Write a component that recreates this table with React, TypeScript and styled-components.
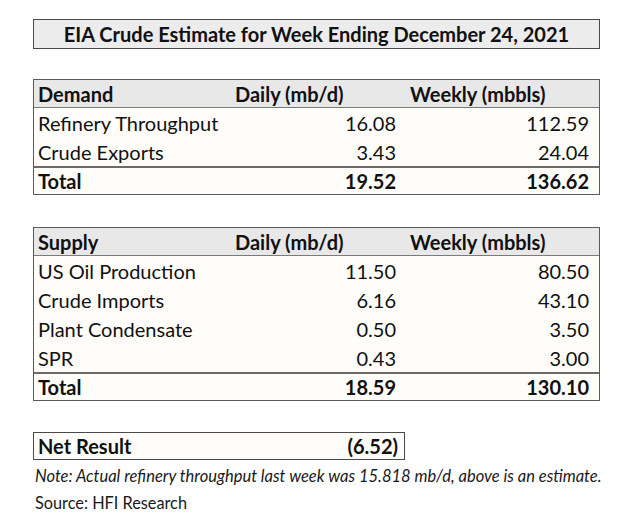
import React from "react";
import styled, { createGlobalStyle } from "styled-components";

const GlobalStyle = createGlobalStyle`
  body {
    margin: 0;
    background: #ffffff;
    font-family: Lato, "Liberation Sans", sans-serif;
    color: #111111;
  }
`;

const Page = styled.div`
  width: 620px;
  height: 514px;
  box-sizing: border-box;
  padding: 19px 20px 0 33px;
  display: flex;
  flex-direction: column;
`;

const Title = styled.div`
  width: 567px;
  height: 30px;
  box-sizing: border-box;
  border: 1.5px solid #4a4a4a;
  background: #ececec;
  display: flex;
  align-items: center;
  justify-content: center;
  font-weight: 700;
  font-size: 20px;
  color: #111;
`;

const Table = styled.div<{ $top: number }>`
  margin-top: ${(p) => p.$top}px;
  width: 567px;
  box-sizing: border-box;
  border: 1.5px solid #5a5a5a;
  background: #fefdf9;
`;

const Row = styled.div<{ $kind: "head" | "body" | "total" }>`
  display: grid;
  grid-template-columns: 197px 161px 1fr;
  align-items: center;
  height: ${(p) => (p.$kind === "body" ? 29 : 28)}px;
  box-sizing: border-box;
  padding: 0 10px 0 4px;
  font-size: 20px;
  font-weight: ${(p) => (p.$kind === "body" ? 400 : 700)};
  background: ${(p) => (p.$kind === "head" ? "#e8e8e8" : "transparent")};
  border-bottom: ${(p) => (p.$kind === "head" ? "1.5px solid #7a7a7a" : "none")};
  border-top: ${(p) => (p.$kind === "total" ? "2px solid #6a6a6a" : "none")};
`;

const Cell = styled.div<{ $align?: "left" | "right" }>`
  text-align: ${(p) => p.$align || "left"};
  white-space: nowrap;
`;

const HeadCell = styled.div<{ $indent?: number }>`
  padding-left: ${(p) => p.$indent || 0}px;
  white-space: nowrap;
`;

const NetBox = styled.div`
  margin-top: 31px;
  width: 372px;
  height: 28px;
  box-sizing: border-box;
  border: 1.5px solid #4a4a4a;
  background: #fefdf9;
  display: flex;
  align-items: center;
  justify-content: space-between;
  padding: 0 6px 0 4px;
  font-weight: 700;
  font-size: 20px;
`;

const Note = styled.div`
  margin-top: 6px;
  font-style: italic;
  font-size: 16.5px;
  color: #1a1a1a;
  padding-left: 2px;
  white-space: nowrap;
`;

const Source = styled.div`
  margin-top: 7px;
  font-size: 16.3px;
  color: #1a1a1a;
  padding-left: 2px;
`;

type Line = [string, string, string];

const demand: Line[] = [
  ["Refinery Throughput", "16.08", "112.59"],
  ["Crude Exports", "3.43", "24.04"],
];

const supply: Line[] = [
  ["US Oil Production", "11.50", "80.50"],
  ["Crude Imports", "6.16", "43.10"],
  ["Plant Condensate", "0.50", "3.50"],
  ["SPR", "0.43", "3.00"],
];

function Block({
  label,
  rows,
  total,
  top,
}: {
  label: string;
  rows: Line[];
  total: [string, string];
  top: number;
}) {
  return (
    <Table $top={top}>
      <Row $kind="head">
        <HeadCell>{label}</HeadCell>
        <HeadCell>Daily (mb/d)</HeadCell>
        <HeadCell $indent={14}>Weekly (mbbls)</HeadCell>
      </Row>
      {rows.map((r) => (
        <Row $kind="body" key={r[0]}>
          <Cell>{r[0]}</Cell>
          <Cell $align="right">{r[1]}</Cell>
          <Cell $align="right">{r[2]}</Cell>
        </Row>
      ))}
      <Row $kind="total">
        <Cell>Total</Cell>
        <Cell $align="right">{total[0]}</Cell>
        <Cell $align="right">{total[1]}</Cell>
      </Row>
    </Table>
  );
}

export default function App() {
  return (
    <Page>
      <GlobalStyle />
      <Title>EIA Crude Estimate for Week Ending December 24, 2021</Title>
      <Block label="Demand" rows={demand} total={["19.52", "136.62"]} top={30} />
      <Block label="Supply" rows={supply} total={["18.59", "130.10"]} top={32} />
      <NetBox>
        <span>Net Result</span>
        <span>(6.52)</span>
      </NetBox>
      <Note>
        Note: Actual refinery throughput last week was 15.818 mb/d, above is an estimate.
      </Note>
      <Source>Source: HFI Research</Source>
    </Page>
  );
}
